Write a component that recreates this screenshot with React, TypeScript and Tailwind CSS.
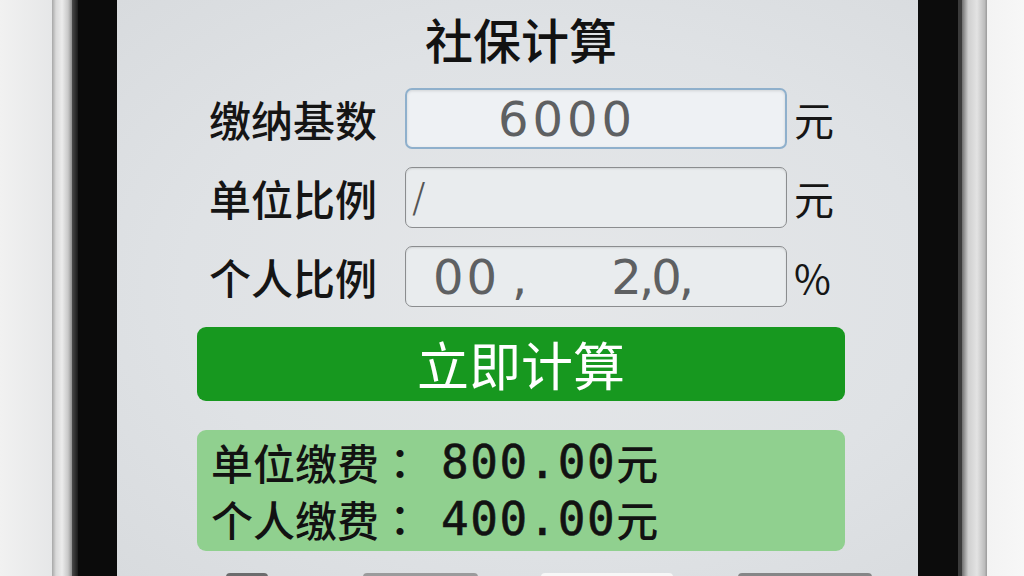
import * as React from 'react';

const cjk = "font-['Noto_Sans_CJK_SC','Noto_Sans',sans-serif]";
const lcd = "font-['DejaVu_Sans','Liberation_Sans',sans-serif] text-[#5e6062]";

interface FieldRowProps {
  label: string;
  unit: string;
  focused?: boolean;
  children?: React.ReactNode;
}

function FieldRow({ label, unit, focused, children }: FieldRowProps) {
  return (
    <div className="flex items-center h-[61px]">
      <div className={`w-[208px] pl-[12px] text-[42px] leading-none font-medium text-[#151515] ${cjk}`}>{label}</div>
      <div
        className={
          'w-[382px] h-full rounded-[7px] flex items-center overflow-hidden ' +
          (focused
            ? 'border-2 border-[#8fb0cc] bg-[#eef1f4] shadow-[inset_0_1px_3px_rgba(0,0,0,0.12)]'
            : 'border-[1.5px] border-[#8b8d8f] bg-[#e9ecee] shadow-[inset_0_1px_2px_rgba(0,0,0,0.1)]')
        }
      >
        {children}
      </div>
      <div className={`pl-[7px] text-[40px] leading-none text-[#151515] ${cjk}`}>{unit}</div>
    </div>
  );
}

function ResultLine({ label, amount }: { label: string; amount: string }) {
  return (
    <div className="flex items-center h-[58px] text-[#121212]">
      <span className={`text-[42px] leading-none font-medium ${cjk}`}>{label}</span>
      <span className="text-[42px] leading-none font-medium font-['Noto_Sans_CJK_TC',sans-serif]">：</span>
      <span className="ml-[20px] text-[46px] leading-none tracking-[1.5px] font-['DejaVu_Sans_Mono','Liberation_Mono',monospace] [-webkit-text-stroke:0.6px_#121212]">
        {amount}
      </span>
      <span className={`text-[42px] leading-none font-medium ${cjk}`}>元</span>
    </div>
  );
}

export default function App() {
  return (
    <div className="w-[1024px] h-[576px] flex overflow-hidden bg-[#eeeeee]">
      {/* left side of the handset */}
      <div className="w-[52px] h-full bg-[linear-gradient(to_right,#f1f1f1,#e6e7e8)]" />
      <div className="w-[20px] h-full bg-[linear-gradient(to_right,#a7a7a7_0%,#d9d9d9_20%,#ececec_50%,#c9c9c9_80%,#8f8f8f_100%)]" />
      <div className="w-[6px] h-full bg-[linear-gradient(to_right,#4a4a4a,#1a1a1a)]" />
      <div className="w-[39px] h-full bg-[#0b0b0b]" />

      {/* screen */}
      <div className="w-[801px] h-full overflow-hidden bg-[radial-gradient(ellipse_at_55%_50%,#e5e7e9_0%,#dfe2e5_60%,#d8dbde_100%)]">
        <div className="pl-[80px] pr-[73px] flex flex-col">
          <h1 className={`mt-[14px] h-[48px] text-center text-[48px] leading-none font-medium text-[#121212] ${cjk}`}>
            社保计算
          </h1>

          <div className="mt-[26px] flex flex-col gap-[18px]">
            <FieldRow label="缴纳基数" unit="元" focused>
              <span className={`pl-[91px] text-[48px] leading-none tracking-[4px] ${lcd}`}>6000</span>
            </FieldRow>
            <FieldRow label="单位比例" unit="元">
              <span className="pl-[6px] text-[40px] leading-none text-[#555] font-['DejaVu_Sans',sans-serif] font-light">/</span>
            </FieldRow>
            <FieldRow label="个人比例" unit="%">
              <span className={`pl-[27px] text-[48px] leading-none tracking-[3px] ${lcd}`}>00</span>
              <span className={`pl-[12px] text-[48px] leading-none ${lcd}`}>,</span>
              <span className={`pl-[84px] text-[48px] leading-none tracking-[-3px] ${lcd}`}>2,0,</span>
            </FieldRow>
          </div>

          <button className={`mt-[20px] h-[74px] w-full rounded-[9px] bg-[#17981f] text-white text-[52px] leading-none ${cjk}`}>
            立即计算
          </button>

          <div className="mt-[29px] h-[121px] rounded-[9px] bg-[#90d08f] pl-[14px] py-[3px] flex flex-col">
            <ResultLine label="单位缴费" amount="800.00" />
            <ResultLine label="个人缴费" amount="400.00" />
          </div>
        </div>

        {/* tab bar peeking in at the bottom edge */}
        <div className="mt-[22px] h-[10px] relative">
          <div className="flex">
            <div className="ml-[109px] w-[42px] h-[10px] rounded-t-[4px] bg-[#6b6c6d]" />
            <div className="ml-[95px] w-[115px] h-[10px] rounded-t-[4px] bg-[#9a9b9c]" />
            <div className="ml-[63px] w-[132px] h-[10px] rounded-t-[4px] bg-[#f7f7f7]" />
            <div className="ml-[65px] w-[134px] h-[10px] rounded-t-[4px] bg-[#858687]" />
          </div>
        </div>
      </div>

      {/* right side of the handset */}
      <div className="w-[40px] h-full bg-[#0c0c0c]" />
      <div className="w-[4px] h-full bg-[#3b3b3b]" />
      <div className="w-[25px] h-full bg-[linear-gradient(to_right,#6f6f6f_0%,#cfcfcf_25%,#e3e3e3_60%,#bdbdbd_90%,#9a9a9a_100%)]" />
      <div className="flex-1 h-full bg-[linear-gradient(to_right,#f3f3f3,#f7f7f7)]" />
    </div>
  );
}
